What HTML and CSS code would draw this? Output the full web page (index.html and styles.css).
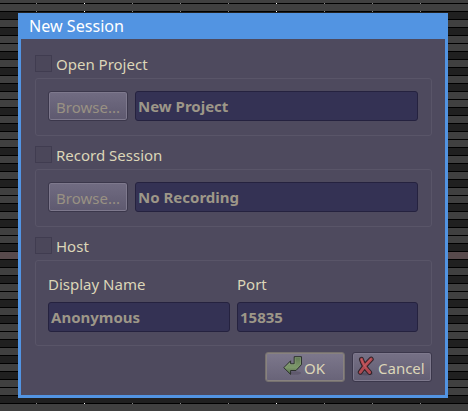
FILE: index.html
```html
<!DOCTYPE html>
<html lang="en">
<head>
<meta charset="utf-8">
<title>New Session</title>
<link rel="stylesheet" href="styles.css">
</head>
<body>
<div class="ticks ticks-top"></div>
<div class="ticks ticks-second"></div>
<div class="ticks ticks-bottom"></div>
<div class="active-row"></div>
<main class="dialog">
  <header class="title"><span>New Session</span></header>
  <form class="content">
    <label class="option"><span class="check"></span><span class="label">Open Project</span></label>
    <section class="group">
      <div class="row">
        <button type="button" class="button browse" disabled><span>Browse...</span></button>
        <div class="entry grow"><span>New Project</span></div>
      </div>
    </section>
    <label class="option"><span class="check"></span><span class="label">Record Session</span></label>
    <section class="group">
      <div class="row">
        <button type="button" class="button browse" disabled><span>Browse...</span></button>
        <div class="entry grow"><span>No Recording</span></div>
      </div>
    </section>
    <label class="option"><span class="check"></span><span class="label">Host</span></label>
    <section class="group host">
      <div class="field name"><span class="label">Display Name</span><div class="entry"><span>Anonymous</span></div></div>
      <div class="field port"><span class="label">Port</span><div class="entry"><span>15835</span></div></div>
    </section>
    <footer class="actions">
      <button type="button" class="button ok">
        <svg width="20" height="20" viewBox="0 0 20 20">
          <defs><linearGradient id="green" x1="0" y1="0" x2="0" y2="1"><stop offset="0" stop-color="#5f7853"/><stop offset=".6" stop-color="#7d986b"/><stop offset="1" stop-color="#536a49"/></linearGradient></defs>
          <ellipse cx="12" cy="17" rx="6" ry="1.7" fill="#565064" opacity=".6"/>
          <path d="M11.2 .7H18.5V8.6L13 14.5H7.6V18.4L.8 11.7L7.6 4.8V7.8H11.2Z" fill="url(#green)" stroke="#2b302c" stroke-linejoin="round"/>
          <path d="M12.1 8.6V1.6H17.6V8M2.2 11.5L6.7 7V8.7H12" fill="none" stroke="#a0b48e" stroke-width=".7" opacity=".55"/>
        </svg>
        <span>OK</span>
      </button>
      <button type="button" class="button cancel">
        <svg width="18" height="20" viewBox="0 0 18 20">
          <ellipse cx="9" cy="18" rx="7" ry="1.5" fill="#4b4559" opacity=".6"/>
          <g fill="none" stroke-linecap="round" stroke-linejoin="round">
            <path d="M4.5 3.4Q6.5 10 12.6 16.4M14.2 3.2Q8 9 3.3 16.2" stroke="#302329" stroke-width="5"/>
            <path d="M4.5 3.4Q6.5 10 12.6 16.4M14.2 3.2Q8 9 3.3 16.2" stroke="#b04951" stroke-width="3"/>
            <path d="M4.4 3.4Q6.5 9 9 12M13.8 3.4Q10 7 7.5 10" stroke="#cf6266" stroke-width=".8"/>
          </g>
        </svg>
        <span>Cancel</span>
      </button>
    </footer>
  </form>
</main>
</body>
</html>
```

FILE: styles.css
```css
* { box-sizing: border-box; }
body {
  margin: 0;
  width: 468px;
  height: 411px;
  padding: 13px 20px 13px 18px;
  overflow: hidden;
  position: relative;
  font: 15px/20px "Noto Sans", sans-serif;
  color: #dcd6b8;
  background:
    linear-gradient(#000 1px, transparent 1px) 0 3px / 100% 8px,
    linear-gradient(#404040 0 8px, #202020 8px 16px, #404040 16px 24px, #202020 24px 32px, #404040 32px 48px, #202020 48px 56px, #404040 56px 64px, #202020 64px 72px, #404040 72px 80px, #202020 80px 88px, #404040 88px 96px) 0 3px / 100% 96px;
}
.ticks {
  position: absolute;
  left: 0;
  width: 468px;
  height: 1px;
  background:
    linear-gradient(90deg, #fff 1px, transparent 1px) 84px 0 / 192px 1px,
    linear-gradient(90deg, #888 1px, transparent 1px) 36px 0 / 48px 1px;
}
.ticks-top { top: 3px; }
.ticks-second { top: 11px; }
.ticks-bottom { top: 403px; }
.active-row {
  position: absolute;
  top: 252px;
  left: 0;
  width: 468px;
  height: 7px;
  background: #584a4c;
}
.dialog {
  position: relative;
  width: 430px;
  height: 385px;
  border: 3px solid #5294e2;
  border-top: 0;
  background: #4e4a5e;
}
.title {
  height: 26px;
  padding: 1px 0 0 8px;
  background: #5294e2;
  color: #fff;
  font-size: 16.1px;
  line-height: 24px;
}
.content { padding: 16px 13px 0 14px; }
.option {
  display: flex;
  height: 17px;
  align-items: center;
  gap: 4px;
}
.check {
  width: 17px;
  height: 17px;
  border: 1px solid #403c50;
  background: #4b475a;
}
.group {
  width: 397px;
  height: 58px;
  margin: 6px 0 10px;
  padding: 12px 13px 0 12px;
  border: 1px solid #595568;
  border-radius: 3px;
}
.row { display: flex; gap: 7px; }
.button {
  display: flex;
  align-items: center;
  height: 30px;
  margin: 0;
  padding: 0;
  border: 1px solid #3b374b;
  border-radius: 3px;
  background: linear-gradient(#767186, #625d72);
  box-shadow: inset 0 0 0 1px #7e798d;
  color: #dcd6b8;
  font: 15px/20px "Noto Sans", sans-serif;
}
.browse {
  width: 80px;
  justify-content: center;
  background: linear-gradient(#716c82, #5e596f);
  color: #999183;
}
.browse span { position: relative; top: 1px; }
.entry {
  height: 30px;
  padding: 4px 3px 0 2px;
  border: 1px solid #25223f;
  border-radius: 3px;
  background: #343254;
  color: #9d9788;
  font-weight: 700;
  line-height: 20px;
}
.grow { flex: 1; }
.host {
  display: flex;
  gap: 7px;
  height: 86px;
  margin-bottom: 6px;
  padding-top: 13px;
}
.field .label { display: block; height: 28px; line-height: 21px; }
.name { width: 182px; }
.port { width: 181px; }
.actions { display: flex; justify-content: flex-end; gap: 7px; }
.actions .button { width: 80px; height: 30px; }
.actions .button span { position: relative; top: 1px; }
.actions svg { display: block; flex: none; margin-bottom: 2px; }
.actions .ok {
  padding-left: 17px;
  gap: 1px;
  border-color: #76716f;
  background: linear-gradient(#7d788c, #686378);
  box-shadow: inset 0 0 0 1px #88827f;
}
.actions .cancel { padding-left: 4px; gap: 3px; }
```
